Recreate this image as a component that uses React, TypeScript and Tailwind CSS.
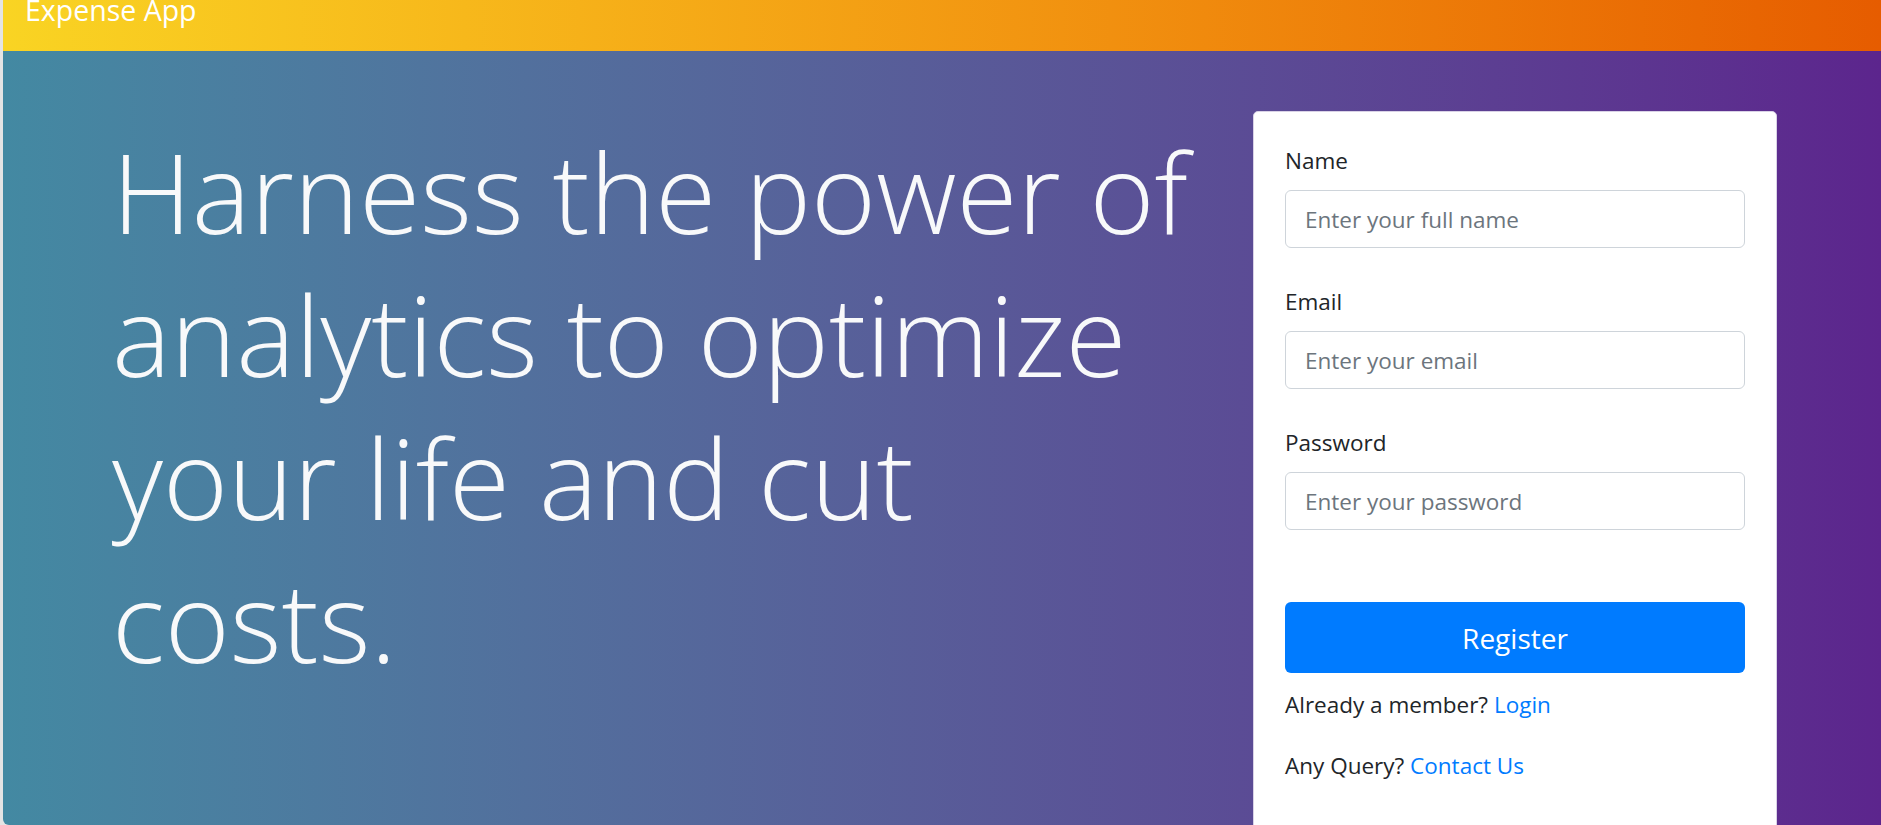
import React from 'react';

const font = "font-['Open_Sans','Noto_Sans',sans-serif]";

function Field({ label, placeholder, type }: { label: string; placeholder: string; type: string }) {
  return (
    <div className="mb-[39px]">
      <label className="mb-[15px] block text-[22.5px] leading-[29px] text-[#212529]">{label}</label>
      <input
        type={type}
        placeholder={placeholder}
        className="block h-[58px] w-full rounded-[6px] border border-[#ced4da] bg-white px-[19px] text-[22.5px] text-[#495057] placeholder:text-[#6c757d] outline-none"
      />
    </div>
  );
}

export default function App() {
  return (
    <div className={`h-[825px] w-full overflow-hidden bg-[#e4e4e4] pl-[3px] ${font}`}>
      {/* Top bar */}
      <header className="flex h-[51px] items-start bg-linear-to-r from-[#F9D423] to-[#e65c00] pl-[22px]">
        <span className="-mt-[4px] text-[28.5px] leading-[28px] text-white">Expense App</span>
      </header>

      {/* Hero + register card */}
      <main className="flex h-[774px] rounded-bl-[6px] bg-linear-to-r from-[#4389A2] to-[#5C258D]">
        <div className="flex-1 pl-[109px] pt-[69px]">
          <h1 className="w-[1110px] text-[111px] font-light leading-[143px] text-[#f8f9fa]">
            Harness the power of analytics to optimize your life and cut costs.
          </h1>
        </div>

        <div className="mr-[104px] mt-[60px] w-[524px] self-start rounded-[5px] border border-[#d9d2e6] bg-white px-[31px] pb-[100px] pt-[34px]">
          <form onSubmit={(e) => e.preventDefault()}>
            <Field label="Name" placeholder="Enter your full name" type="text" />
            <Field label="Email" placeholder="Enter your email" type="email" />
            <Field label="Password" placeholder="Enter your password" type="password" />
            <button
              type="submit"
              className="mt-[72px] block h-[71px] w-full rounded-[6px] bg-[#007bff] text-[28px] text-white"
            >
              Register
            </button>
          </form>
          <p className="mt-[17px] text-[22.5px] leading-[29px] text-[#212529]">
            Already a member? <a className="text-[#007bff]" href="#">Login</a>
          </p>
          <p className="mt-[32px] text-[22.5px] leading-[29px] text-[#212529]">
            Any Query? <a className="text-[#007bff]" href="#">Contact Us</a>
          </p>
        </div>
      </main>
    </div>
  );
}
